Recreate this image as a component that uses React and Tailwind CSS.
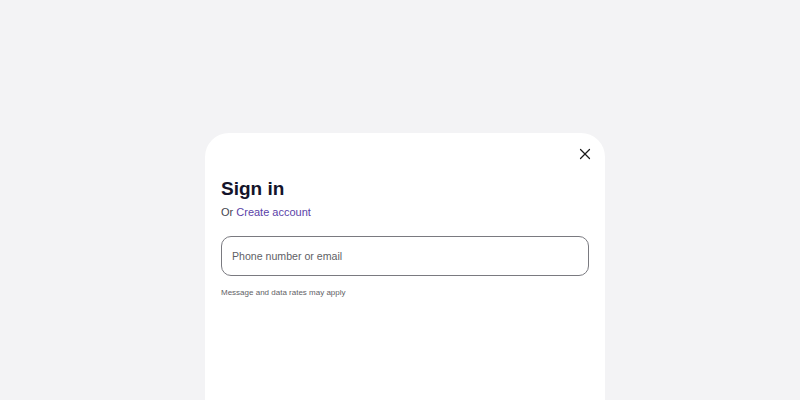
import { X } from "lucide-react";

export default function App() {
  return (
    <div
      className="h-[400px] w-full overflow-hidden bg-[#f3f3f5] pt-[133px] pl-[10px] flex justify-center"
      style={{ fontFamily: '"Liberation Sans", Arial, sans-serif' }}
    >
      <div className="w-[400px] h-[320px] bg-white rounded-[24px] px-4 pt-3">
        <div className="flex justify-end -mr-[5px]">
          <button aria-label="Close" className="text-[#1a1a1a]">
            <X size={18} strokeWidth={1.6} />
          </button>
        </div>
        <h1 className="mt-[14px] text-[19px] leading-6 font-bold text-[#14142b]">Sign in</h1>
        <p className="mt-[3px] text-[11px] leading-4 text-[#46464f]">
          Or <a href="#" className="text-[#5b3fa8]">Create account</a>
        </p>
        <input
          type="text"
          placeholder="Phone number or email"
          className="mt-[16px] block w-full h-[40px] rounded-[10px] border border-[#7a7a80] px-[10px] text-[10.6px] text-[#222] placeholder:text-[#5f5f66] outline-none"
        />
        <p className="mt-[11px] text-[8px] leading-3 text-[#5f5f66]">Message and data rates may apply</p>
      </div>
    </div>
  );
}
